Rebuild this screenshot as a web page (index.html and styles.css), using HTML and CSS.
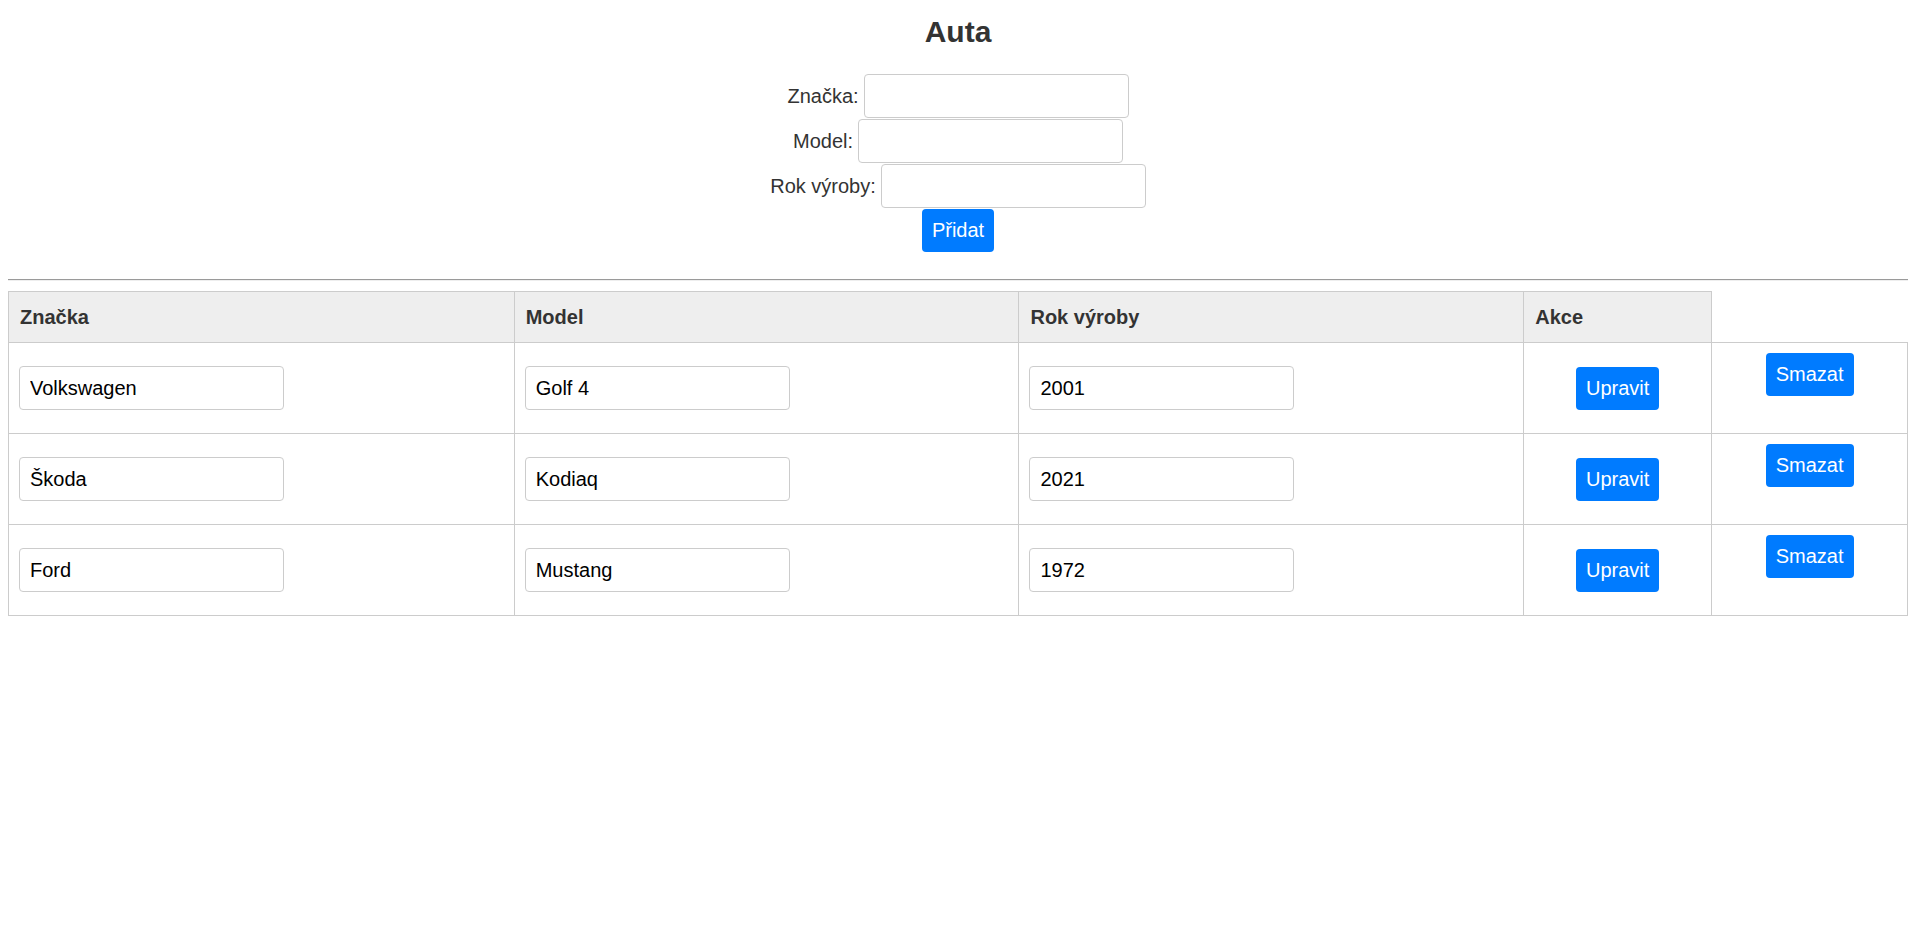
FILE: index.html
```html
<!DOCTYPE html>
<html lang="cs">
<head>
<meta charset="utf-8">
<title>Auta</title>
<link rel="stylesheet" href="styles.css">
</head>
<body>
<h1 class="title">Auta</h1>
<form class="add-form">
  <div class="field"><label class="field-label">Značka:</label><input class="text-input" type="text"></div>
  <div class="field"><label class="field-label">Model:</label><input class="text-input" type="text"></div>
  <div class="field"><label class="field-label">Rok výroby:</label><input class="text-input" type="text"></div>
  <button class="btn" type="button">Přidat</button>
</form>
<hr class="divider">
<table class="cars">
  <colgroup>
    <col class="c-brand">
    <col class="c-model">
    <col class="c-year">
    <col class="c-edit">
    <col class="c-del">
  </colgroup>
  <thead>
    <tr>
      <th>Značka</th>
      <th>Model</th>
      <th>Rok výroby</th>
      <th>Akce</th>
    </tr>
  </thead>
  <tbody>
    <tr>
      <td><input class="text-input" type="text" value="Volkswagen"></td>
      <td><input class="text-input" type="text" value="Golf 4"></td>
      <td><input class="text-input" type="text" value="2001"></td>
      <td class="center"><button class="btn" type="button">Upravit</button></td>
      <td class="center top"><button class="btn" type="button">Smazat</button></td>
    </tr>
    <tr>
      <td><input class="text-input" type="text" value="Škoda"></td>
      <td><input class="text-input" type="text" value="Kodiaq"></td>
      <td><input class="text-input" type="text" value="2021"></td>
      <td class="center"><button class="btn" type="button">Upravit</button></td>
      <td class="center top"><button class="btn" type="button">Smazat</button></td>
    </tr>
    <tr>
      <td><input class="text-input" type="text" value="Ford"></td>
      <td><input class="text-input" type="text" value="Mustang"></td>
      <td><input class="text-input" type="text" value="1972"></td>
      <td class="center"><button class="btn" type="button">Upravit</button></td>
      <td class="center top"><button class="btn" type="button">Smazat</button></td>
    </tr>
  </tbody>
</table>
</body>
</html>
```
FILE: styles.css
```css
html, body {
  background: #fff;
}
body {
  margin: 8px 12px 8px 8px;
  font-family: "Liberation Sans", Arial, sans-serif;
  font-size: 20px;
  color: #333;
}
.title {
  margin: 7px 0 25px;
  font-size: 30px;
  font-weight: bold;
  text-align: center;
  line-height: normal;
}
.add-form {
  display: flex;
  flex-direction: column;
  align-items: center;
  gap: 1px;
  margin: 0 0 27px;
}
.field {
  display: flex;
  align-items: center;
  gap: 5px;
}
.field-label {
  font-size: 20px;
  color: #333;
}
.text-input {
  box-sizing: border-box;
  width: 265px;
  height: 44px;
  padding: 0 10px;
  border: 1px solid #ccc;
  border-radius: 4px;
  font-family: "Liberation Sans", Arial, sans-serif;
  font-size: 20px;
  color: #000;
  background: #fff;
  outline: none;
}
.btn {
  padding: 10px;
  border: none;
  border-radius: 4px;
  background: #007bff;
  color: #fff;
  font-family: "Liberation Sans", Arial, sans-serif;
  font-size: 20px;
  line-height: 23px;
  cursor: pointer;
}
.divider {
  margin: 0 0 10px;
  border: 0;
  border-top: 1px solid #9a9a9a;
  border-bottom: 1px solid #eee;
  height: 0;
}
.cars {
  width: 100%;
  table-layout: fixed;
  border-collapse: collapse;
}
.c-brand { width: 26.63%; }
.c-model { width: 26.58%; }
.c-year { width: 26.58%; }
.c-edit { width: 9.9%; }
.cars th {
  background: #eee;
  border: 1px solid #ccc;
  padding: 12px 11px;
  line-height: 26px;
  text-align: left;
  font-weight: bold;
  color: #333;
}
.cars td {
  border: 1px solid #ccc;
  padding: 10px;
  height: 70px;
  vertical-align: middle;
}
.cars td.center {
  text-align: center;
}
.cars td.top {
  vertical-align: top;
}
```
